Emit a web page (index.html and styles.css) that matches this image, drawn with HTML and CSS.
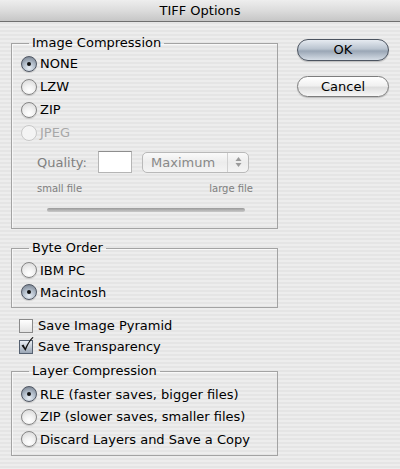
FILE: index.html
```html
<!DOCTYPE html>
<html>
<head>
<meta charset="utf-8">
<link rel="stylesheet" href="styles.css">
</head>
<body>
<div class="window">
  <div class="titlebar">TIFF Options</div>
  <div class="content">
    <div class="left">
      <fieldset class="group g1">
        <legend>Image Compression</legend>
        <div class="row"><span class="radio on"></span><span>NONE</span></div>
        <div class="row"><span class="radio"></span><span>LZW</span></div>
        <div class="row"><span class="radio"></span><span>ZIP</span></div>
        <div class="row disabled"><span class="radio dis"></span><span>JPEG</span></div>
        <div class="quality">
          <span class="qlabel">Quality:</span>
          <span class="qinput"></span>
          <span class="popup"><span class="ptext">Maximum</span><span class="arrows"><svg width="7" height="12" viewBox="0 0 7 12"><path d="M3.5 1 L6.5 5 H0.5 Z M3.5 11 L6.5 7 H0.5 Z" fill="#9a9a9a"/></svg></span></span>
        </div>
        <div class="sizes"><span>small file</span><span>large file</span></div>
        <div class="slider"></div>
      </fieldset>
      <fieldset class="group g2">
        <legend>Byte Order</legend>
        <div class="row"><span class="radio"></span><span>IBM PC</span></div>
        <div class="row"><span class="radio on"></span><span>Macintosh</span></div>
      </fieldset>
      <div class="checks">
        <div class="crow"><span class="check"></span><span>Save Image Pyramid</span></div>
        <div class="crow"><span class="check on"><svg width="16" height="17" viewBox="0 0 16 17"><path d="M2.5 8.5 L6.5 14 C8.5 8.5 10.5 4.5 14.5 0.5 L13.5 0 C10.5 3 8.5 6.5 6.2 11 L4.5 7.5 Z" fill="#111"/></svg></span><span>Save Transparency</span></div>
      </div>
      <fieldset class="group g3">
        <legend>Layer Compression</legend>
        <div class="row"><span class="radio on"></span><span>RLE (faster saves, bigger files)</span></div>
        <div class="row"><span class="radio"></span><span>ZIP (slower saves, smaller files)</span></div>
        <div class="row"><span class="radio"></span><span>Discard Layers and Save a Copy</span></div>
      </fieldset>
    </div>
    <div class="right">
      <div class="btn default">OK</div>
      <div class="btn">Cancel</div>
    </div>
  </div>
</div>
</body>
</html>
```
FILE: styles.css
```css
html, body {
  margin: 0;
  padding: 0;
}
body {
  width: 400px;
  height: 469px;
  overflow: hidden;
  font-family: "DejaVu Sans", "Lucida Grande", sans-serif;
  font-size: 13px;
  color: #000;
}
.window {
  width: 400px;
  height: 469px;
  background: repeating-linear-gradient(to bottom, #ededed 0px, #ededed 2px, #e5e5e5 2px, #e5e5e5 4px);
}
.titlebar {
  height: 21px;
  line-height: 22px;
  text-align: center;
  font-size: 13px;
  background: linear-gradient(to bottom, #eeeeee 0%, #dcdcdc 50%, #c6c6c6 100%);
  border-bottom: 1px solid #6f6f6f;
  color: #000;
}
.content {
  display: flex;
  padding: 13px 0 0 11px;
}
.left {
  width: 267px;
  display: flex;
  flex-direction: column;
}
.right {
  margin-left: 19px;
  padding-top: 4px;
  display: flex;
  flex-direction: column;
  gap: 15px;
}
.group {
  margin: 0;
  padding: 1px 0 0 0;
  border: 1px solid #a3a3a3;
  box-shadow: inset 1px 1px 0 rgba(255,255,255,0.6);
  min-width: 0;
}
.group legend {
  margin-left: 17px;
  padding: 0 3px;
  line-height: 16px;
  font-size: 13px;
}
.row {
  height: 23px;
  display: flex;
  align-items: center;
  padding-left: 9px;
  white-space: nowrap;
}
.row .radio {
  margin-right: 3px;
}
.disabled { color: #a8a8a8; }
.radio {
  width: 16px;
  height: 16px;
  border-radius: 50%;
  border: 1px solid #858585;
  background: radial-gradient(circle at 50% 75%, #ffffff 0%, #f2f2f2 40%, #d4d4d4 100%);
  box-sizing: border-box;
  position: relative;
  flex: none;
  box-shadow: 0 1px 1px rgba(0,0,0,0.15);
}
.radio.on {
  border-color: #4f5663;
  background: radial-gradient(circle at 50% 80%, #e8eef5 0%, #b4bfcc 45%, #6c7684 100%);
}
.radio.on::after {
  content: "";
  position: absolute;
  left: 5px;
  top: 5px;
  width: 4px;
  height: 4px;
  border-radius: 50%;
  background: #111;
}
.radio.dis {
  border-color: #c8c8c8;
  background: #f4f4f4;
  box-shadow: none;
}
.quality {
  display: flex;
  align-items: center;
  height: 22px;
  margin-top: 7px;
  padding-left: 25px;
  color: #808080;
}
.qlabel { width: 61px; }
.qinput {
  width: 34px;
  height: 22px;
  box-sizing: border-box;
  border: 1px solid #b5b5b5;
  border-top-color: #8e8e8e;
  background: #fff;
  margin-right: 10px;
}
.popup {
  width: 107px;
  height: 21px;
  box-sizing: border-box;
  border: 1px solid #b9b9b9;
  border-radius: 5px;
  background: linear-gradient(to bottom, #fafafa, #ececec 50%, #f4f4f4);
  display: flex;
  align-items: center;
}
.ptext {
  flex: 1;
  padding-left: 8px;
  color: #888;
}
.arrows {
  width: 20px;
  height: 19px;
  border-left: 1px solid #d0d0d0;
  display: flex;
  align-items: center;
  justify-content: center;
}
.sizes {
  display: flex;
  justify-content: space-between;
  margin: 10px 24px 0 25px;
  font-size: 10px;
  line-height: 12px;
  color: #808080;
}
.slider {
  margin: 13px 32px 16px 35px;
  height: 4px;
  border-radius: 2px;
  background: linear-gradient(to bottom, #9a9a9a, #c9c9c9);
}
.g2 {
  margin-top: 11px;
  padding: 3px 0 4px 0;
}
.g2 .row { height: 22px; }
.checks {
  padding: 7px 0 6px 8px;
}
.crow {
  height: 21px;
  display: flex;
  align-items: center;
}
.check {
  width: 14px;
  height: 14px;
  box-sizing: border-box;
  border: 1px solid #8a8a8a;
  background: linear-gradient(to bottom, #ffffff, #e2e2e2);
  margin-right: 5px;
  position: relative;
  flex: none;
}
.check.on {
  background: linear-gradient(to bottom, #e8eef5, #9aa6b5);
  border-color: #556070;
}
.check svg {
  position: absolute;
  left: -1px;
  top: -4px;
}
.g3 {
  padding: 4px 0 4px 0;
}
.g3 .row { height: 22.5px; }
.btn {
  width: 92px;
  height: 21px;
  box-sizing: border-box;
  border: 1px solid #7d7d7d;
  border-radius: 11px;
  text-align: center;
  line-height: 19px;
  font-size: 13px;
  background: linear-gradient(to bottom, #ffffff 0%, #f1f1f1 45%, #dedede 55%, #f7f7f7 100%);
  box-shadow: 0 1px 1px rgba(0,0,0,0.2);
}
.btn.default {
  height: 22px;
  border-color: #4c5460;
  background: linear-gradient(to bottom, #e6ebf1 0%, #b9c3cf 45%, #9aa6b5 55%, #d5dde6 100%);
}
```
